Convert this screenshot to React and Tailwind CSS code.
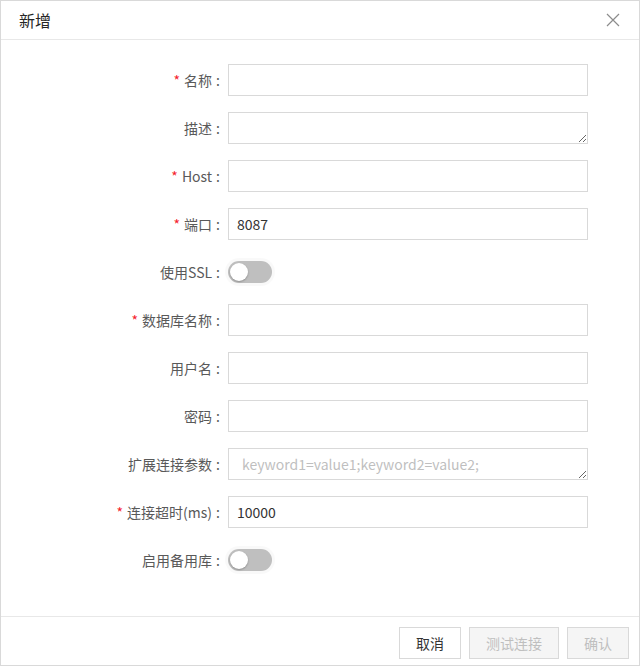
import React from 'react';

const font = { fontFamily: '"Noto Sans CJK SC", "Noto Sans", sans-serif' };

const fields = [
    { label: '名称', required: true, type: 'input' },
    { label: '描述', type: 'textarea' },
    { label: 'Host', required: true, type: 'input' },
    { label: '端口', required: true, type: 'input', value: '8087' },
    { label: '使用SSL', type: 'switch' },
    { label: '数据库名称', required: true, type: 'input' },
    { label: '用户名', type: 'input' },
    { label: '密码', type: 'input' },
    { label: '扩展连接参数', type: 'textarea', placeholder: 'keyword1=value1;keyword2=value2;' },
    { label: '连接超时(ms)', required: true, type: 'input', value: '10000' },
    { label: '启用备用库', type: 'switch' },
];

function Field({ field }) {
    if (field.type === 'switch') {
        return (
            <button className="relative w-[44px] h-[22px] rounded-full bg-[#bfbfbf] shadow-[0_0_0_3px_rgba(0,0,0,0.025)]">
                <span className="absolute left-[2px] top-[2px] w-[18px] h-[18px] rounded-full bg-white shadow-[0_1px_2px_rgba(0,0,0,0.25)]" />
            </button>
        );
    }
    if (field.type === 'textarea') {
        return (
            <textarea
                rows={1}
                readOnly
                placeholder={field.placeholder}
                className={
                    'block w-[360px] h-8 border border-[#d9d9d9] py-[4px] text-[14px] leading-[22px] text-[#333] outline-none placeholder:text-[#bfbfbf] ' +
                    (field.placeholder ? 'pl-[13px] pr-[8px]' : 'px-[8px]')
                }
                style={font}
            />
        );
    }
    return (
        <input
            readOnly
            defaultValue={field.value || ''}
            className="block w-[360px] h-8 border border-[#d9d9d9] px-[8px] text-[14px] text-[#333] outline-none"
            style={font}
        />
    );
}

export default function App() {
    return (
        <div className="w-[640px] h-[666px] border border-[#d9d9d9] bg-white flex flex-col" style={font}>
            <div className="h-[39px] border-b border-[#e8e8e8] flex items-center justify-between pl-[18px] pr-[19px]">
                <span className="text-[16px] text-[#262626]">新增</span>
                <svg width="14" height="14" viewBox="0 0 14 14" className="text-[#8c8c8c]">
                    <path d="M1 1 L13 13 M13 1 L1 13" stroke="currentColor" strokeWidth="1.2" fill="none" />
                </svg>
            </div>

            <div className="flex-1 pt-[24px]">
                {fields.map((field, index) => (
                    <div key={index} className="flex items-center h-8 mb-4">
                        <div className="w-[227px] flex justify-end items-center text-[14px] text-[#595959]">
                            {field.required && <span className="text-[#f5222d] mr-[4px]">*</span>}
                            <span>{field.label}</span>
                            <span className="ml-[4px] mr-[8px]">:</span>
                        </div>
                        <Field field={field} />
                    </div>
                ))}
            </div>

            <div className="h-[49px] border-t border-[#e8e8e8] flex justify-end items-start gap-2 pt-[10px] pr-[10px]">
                <button className="h-8 px-4 border border-[#d9d9d9] bg-white text-[14px] text-[#333]">取消</button>
                <button className="h-8 px-4 border border-[#d9d9d9] bg-[#f5f5f5] text-[14px] text-[#bfbfbf]">测试连接</button>
                <button className="h-8 px-4 border border-[#d9d9d9] bg-[#f5f5f5] text-[14px] text-[#bfbfbf]">确认</button>
            </div>
        </div>
    );
}
